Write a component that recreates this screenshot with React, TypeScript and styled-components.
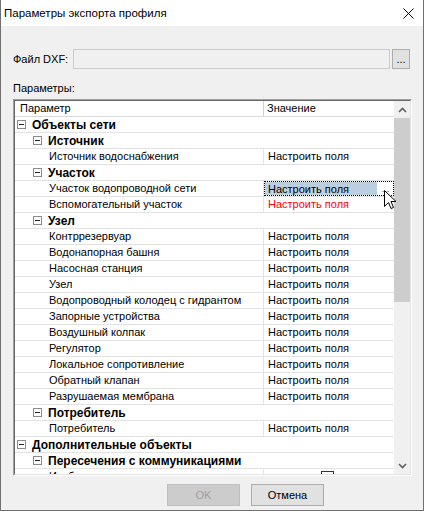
import React from "react";
import styled, { createGlobalStyle } from "styled-components";

const GlobalStyle = createGlobalStyle`
  html, body { margin: 0; padding: 0; background: #f0f0f0; }
  * { box-sizing: border-box; }
`;

const FONT = `"Liberation Sans", Arial, sans-serif`;

const Window = styled.div`
  width: 424px;
  height: 511px;
  border: 1px solid #707070;
  border-top: none;
  background: #f0f0f0;
  display: flex;
  flex-direction: column;
  font-family: ${FONT};
  font-size: 11px;
  color: #000;
  overflow: hidden;
`;

const TitleBar = styled.div`
  height: 26px;
  flex: none;
  background: #fff;
  display: flex;
  align-items: center;
  justify-content: space-between;
  padding: 0 9px 0 3px;
`;

const TitleText = styled.span`
  font-size: 11.5px;
`;

const Body = styled.div`
  flex: 1;
  display: flex;
  flex-direction: column;
  padding: 23px 12px 0 11px;
`;

const FileRow = styled.div`
  display: flex;
  align-items: center;
  height: 20px;
`;

const FileLabel = styled.span`
  width: 61px;
  flex: none;
  padding-left: 1px;
`;

const FileInput = styled.div`
  width: 317px;
  height: 20px;
  border: 1px solid #cccccc;
  background: #f0f0f0;
`;

const DotsButton = styled.div`
  width: 18px;
  height: 20px;
  margin-left: 2px;
  border: 1px solid #adadad;
  background: #e1e1e1;
  display: flex;
  justify-content: center;
  align-items: flex-end;
  line-height: 14px;
  padding-bottom: 2px;
  font-size: 11px;
`;

const SectionLabel = styled.div`
  margin-top: 12px;
  height: 18px;
  line-height: 14px;
  padding-left: 1px;
`;

const Frame = styled.div`
  width: 399px;
  height: 377px;
  margin-left: 1px;
  border: 1px solid;
  border-color: #a0a0a0 #ffffff #ffffff #a0a0a0;
`;

const FrameInner = styled.div`
  height: 100%;
  border: 1px solid;
  border-color: #696969 #e3e3e3 #e3e3e3 #696969;
  background: #fff;
  display: flex;
  position: relative;
`;

const Grid = styled.div`
  flex: 1;
  overflow: hidden;
  display: flex;
  flex-direction: column;
`;

const HeaderRow = styled.div`
  height: 16px;
  flex: none;
  display: flex;
  border-bottom: 1px solid #d9d9d9;
  background: #fff;
`;

const HeaderCell = styled.div<{ $w?: number }>`
  ${(p) => (p.$w ? `width: ${p.$w}px; border-right: 1px solid #d0d0d0;` : "flex: 1;")}
  padding-left: ${(p) => (p.$w ? 5 : 3)}px;
  line-height: 15px;
  white-space: nowrap;
`;

const Row = styled.div`
  height: 16px;
  flex: none;
  display: flex;
  align-items: stretch;
  border-bottom: 1px solid #e3e3e3;
  white-space: nowrap;
`;

const CategoryCell = styled.div<{ $level: number }>`
  display: flex;
  align-items: center;
  padding-left: ${(p) => (p.$level === 0 ? 2 : 18)}px;
  font-weight: bold;
  font-size: 12px;
`;

const ExpandBox = styled.span`
  width: 9px;
  height: 9px;
  border: 1px solid #8c8c8c;
  background: #fff;
  position: relative;
  margin-right: 6px;
  flex: none;
  &::after {
    content: "";
    position: absolute;
    left: 1px;
    top: 3px;
    width: 5px;
    height: 1px;
    background: #222;
  }
`;

const NameCell = styled.div`
  width: 249px;
  flex: none;
  border-right: 1px solid #e3e3e3;
  padding-left: 34px;
  line-height: 15px;
  overflow: hidden;
`;

const ValueCell = styled.div<{ $red?: boolean }>`
  flex: 1;
  padding-left: 4px;
  line-height: 15px;
  color: ${(p) => (p.$red ? "#ff0000" : "#000")};
  position: relative;
`;

const SelectedValue = styled.div`
  flex: 1;
  display: flex;
  outline: 1px dotted #000;
  outline-offset: -1px;
  line-height: 14px;
`;

const SelectedFill = styled.div`
  width: 112px;
  background: #bccfe0;
  margin: 1px 0 1px 1px;
  padding-left: 3px;
`;

const EllipsisMark = styled.div`
  flex: 1;
  display: flex;
  justify-content: center;
  align-items: flex-end;
  font-size: 9px;
  line-height: 10px;
  color: #333;
  padding-bottom: 2px;
`;

const CheckBox = styled.span`
  position: absolute;
  left: 57px;
  top: 2px;
  width: 13px;
  height: 13px;
  border: 1px solid #333;
  background: #fff;
`;

const ScrollBar = styled.div`
  width: 16px;
  flex: none;
  background: #f0f0f0;
  display: flex;
  flex-direction: column;
`;

const ScrollArrow = styled.div`
  height: 17px;
  flex: none;
  display: flex;
  align-items: center;
  justify-content: center;
`;

const ScrollThumb = styled.div`
  height: 184px;
  background: #cdcdcd;
  flex: none;
`;

const ScrollTrack = styled.div`
  flex: 1;
`;

const Cursor = styled.svg`
  position: absolute;
  left: 369px;
  top: 89px;
`;

const Footer = styled.div`
  display: flex;
  gap: 11px;
  padding: 8px 0 0 155px;
`;

const Button = styled.div<{ $disabled?: boolean }>`
  width: 73px;
  height: 22px;
  display: flex;
  align-items: center;
  justify-content: center;
  border: 1px solid ${(p) => (p.$disabled ? "#bfbfbf" : "#adadad")};
  background: ${(p) => (p.$disabled ? "#cccccc" : "#e1e1e1")};
  color: ${(p) => (p.$disabled ? "#a0a0a0" : "#000")};
`;

type RowData =
  | { kind: "cat"; level: number; label: string }
  | { kind: "leaf"; label: string; value?: string; red?: boolean; selected?: boolean; check?: boolean };

const V = "Настроить поля";

const rows: RowData[] = [
  { kind: "cat", level: 0, label: "Объекты сети" },
  { kind: "cat", level: 1, label: "Источник" },
  { kind: "leaf", label: "Источник водоснабжения", value: V },
  { kind: "cat", level: 1, label: "Участок" },
  { kind: "leaf", label: "Участок водопроводной сети", value: V, selected: true },
  { kind: "leaf", label: "Вспомогательный участок", value: V, red: true },
  { kind: "cat", level: 1, label: "Узел" },
  { kind: "leaf", label: "Контррезервуар", value: V },
  { kind: "leaf", label: "Водонапорная башня", value: V },
  { kind: "leaf", label: "Насосная станция", value: V },
  { kind: "leaf", label: "Узел", value: V },
  { kind: "leaf", label: "Водопроводный колодец с гидрантом", value: V },
  { kind: "leaf", label: "Запорные устройства", value: V },
  { kind: "leaf", label: "Воздушный колпак", value: V },
  { kind: "leaf", label: "Регулятор", value: V },
  { kind: "leaf", label: "Локальное сопротивление", value: V },
  { kind: "leaf", label: "Обратный клапан", value: V },
  { kind: "leaf", label: "Разрушаемая мембрана", value: V },
  { kind: "cat", level: 1, label: "Потребитель" },
  { kind: "leaf", label: "Потребитель", value: V },
  { kind: "cat", level: 0, label: "Дополнительные объекты" },
  { kind: "cat", level: 1, label: "Пересечения с коммуникациями" },
  { kind: "leaf", label: "Изображать", check: true },
];

function GridRow({ r }: { r: RowData }) {
  if (r.kind === "cat") {
    return (
      <Row>
        <CategoryCell $level={r.level}>
          <ExpandBox />
          {r.label}
        </CategoryCell>
      </Row>
    );
  }
  return (
    <Row>
      <NameCell>{r.label}</NameCell>
      {r.selected ? (
        <SelectedValue>
          <SelectedFill>{r.value}</SelectedFill>
          <EllipsisMark>...</EllipsisMark>
        </SelectedValue>
      ) : (
        <ValueCell $red={r.red}>
          {r.value}
          {r.check && <CheckBox />}
        </ValueCell>
      )}
    </Row>
  );
}

export default function App() {
  return (
    <>
      <GlobalStyle />
      <Window>
        <TitleBar>
          <TitleText>Параметры экспорта профиля</TitleText>
          <svg width="11" height="11" viewBox="0 0 11 11">
            <path d="M0.5 0.5 L10.5 10.5 M10.5 0.5 L0.5 10.5" stroke="#000" strokeWidth="1" />
          </svg>
        </TitleBar>
        <Body>
          <FileRow>
            <FileLabel>Файл DXF:</FileLabel>
            <FileInput />
            <DotsButton>...</DotsButton>
          </FileRow>
          <SectionLabel>Параметры:</SectionLabel>
          <Frame>
            <FrameInner>
              <Grid>
                <HeaderRow>
                  <HeaderCell $w={249}>Параметр</HeaderCell>
                  <HeaderCell>Значение</HeaderCell>
                </HeaderRow>
                {rows.map((r, i) => (
                  <GridRow key={i} r={r} />
                ))}
              </Grid>
              <ScrollBar>
                <ScrollArrow>
                  <svg width="9" height="6" viewBox="0 0 9 6">
                    <path d="M1 5 L4.5 1.5 L8 5" stroke="#606060" strokeWidth="1.6" fill="none" />
                  </svg>
                </ScrollArrow>
                <ScrollThumb />
                <ScrollTrack />
                <ScrollArrow>
                  <svg width="9" height="6" viewBox="0 0 9 6">
                    <path d="M1 1 L4.5 4.5 L8 1" stroke="#606060" strokeWidth="1.6" fill="none" />
                  </svg>
                </ScrollArrow>
              </ScrollBar>
              <Cursor width="13" height="21" viewBox="0 0 13 21">
                <path
                  d="M0.5 0.5 L0.5 16.5 L4.5 12.5 L7 18.5 L9.5 17.5 L7 11.5 L12 11.5 Z"
                  fill="#fff"
                  stroke="#000"
                  strokeWidth="1"
                  strokeLinejoin="miter"
                />
              </Cursor>
            </FrameInner>
          </Frame>
          <Footer>
            <Button $disabled>OK</Button>
            <Button>Отмена</Button>
          </Footer>
        </Body>
      </Window>
    </>
  );
}
